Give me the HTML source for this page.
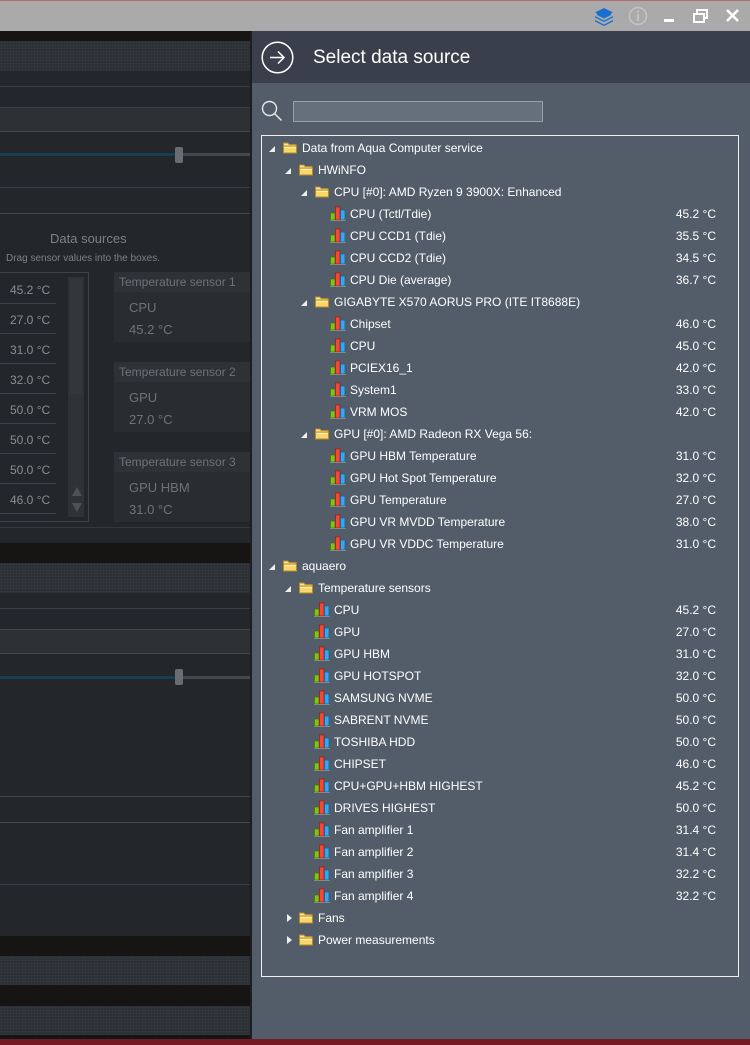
<!DOCTYPE html>
<html><head><meta charset="utf-8"><style>
*{margin:0;padding:0;box-sizing:border-box}
body{width:750px;height:1045px;overflow:hidden;background:#23272b;font-family:"Liberation Sans",sans-serif;position:relative}
.a{position:absolute}
.blk{position:absolute;left:0;width:251px;background:#171414}
.dot{position:absolute;left:0;width:251px;background-color:#2c3035;background-image:radial-gradient(#343941 0.8px,transparent 0.9px);background-size:3px 3px}
.hl{position:absolute;left:0;width:251px;height:1px;background:#3a3f45}
.band{position:absolute;left:0;width:251px;background:#2d3136}
.track{position:absolute;left:0;width:251px;height:3px}
.thumb{position:absolute;left:175px;width:8px;height:16px;background:#6a6d70;border-radius:2px}
.lv{position:absolute;left:10px;font-size:12px;color:#8a8e92}
.sep{position:absolute;left:0;width:56px;height:1px;background:#3e4349}
.sb{position:absolute;left:114px;width:137px;background:#292d31}
.sb .h{height:20px;background:#2e3237;color:#6e7378;font-size:12px;padding:3px 0 0 5px}
.sb .t{color:#6e7378;font-size:13px;padding-left:15px;line-height:22px;margin-top:5px}
.row{position:absolute;height:22px;line-height:22px;font-size:12px;color:#fff;white-space:nowrap}
.val{position:absolute;right:34px;font-size:12px;color:#fff;height:22px;line-height:22px}
.tri{position:absolute;width:0;height:0}
.tri.d{border-left:6px solid transparent;border-bottom:6px solid #eee;margin-top:9px}
.tri.r{border-top:4px solid transparent;border-bottom:4px solid transparent;border-left:5px solid #eee;margin-top:7px}
.fold{position:absolute;width:16px;height:14px}
.bar{position:absolute;width:16px;height:15px}
</style></head><body>
<div class="a" style="left:0;top:0;width:750px;height:31px;background:#aaaaaa;border-top:1px solid #b36b72"></div>
<svg class="a" style="left:594px;top:7px" width="20" height="19" viewBox="0 0 20 19"><path d="M10 1 L19 5.5 L10 10 L1 5.5Z" fill="#1a6fd0"/><path d="M1 9 L10 13.5 L19 9 L19 10.5 L10 15 L1 10.5Z" fill="#1a6fd0"/><path d="M1 13 L10 17.5 L19 13 L19 14.5 L10 19 L1 14.5Z" fill="#1a6fd0"/><path d="M3 6 L10 9.5 L17 6 L17 8 L10 11.5 L3 8Z" fill="#1a6fd0"/></svg>
<svg class="a" style="left:628px;top:6px" width="20" height="20" viewBox="0 0 20 20"><circle cx="10" cy="10" r="8.5" fill="none" stroke="#c4c4c4" stroke-width="1.5"/><rect x="9" y="8" width="2" height="7" fill="#c4c4c4"/><rect x="9" y="4.5" width="2" height="2" fill="#c4c4c4"/></svg>
<div class="a" style="left:664px;top:19px;width:10px;height:3px;background:#fff"></div>
<svg class="a" style="left:693px;top:9px" width="16" height="14" viewBox="0 0 16 14"><rect x="4" y="1" width="10" height="8" fill="none" stroke="#fff" stroke-width="2"/><rect x="1" y="5" width="10" height="8" fill="#aaa" stroke="#fff" stroke-width="2"/></svg>
<svg class="a" style="left:725px;top:8px" width="15" height="15" viewBox="0 0 15 15"><path d="M2 2L13 13M13 2L2 13" stroke="#fff" stroke-width="2.6"/></svg>

<div class="blk" style="top:31px;height:10px"></div>
<div class="dot" style="top:41px;height:30px"></div>
<div class="hl" style="top:86px"></div>
<div class="band" style="top:107px;height:24px"></div>
<div class="hl" style="top:107px"></div><div class="hl" style="top:131px;background:#44484d"></div>
<div class="track" style="top:153px;background:#173e52;width:176px"></div>
<div class="track" style="top:153px;left:183px;width:68px;background:#45484b"></div>
<div class="thumb" style="top:147px"></div>
<div class="hl" style="top:187px"></div>
<div class="hl" style="top:213px;background:#44484d"></div>
<div class="a" style="left:50px;top:231px;font-size:13px;color:#7d8185">Data sources</div>
<div class="a" style="left:6px;top:253px;font-size:10px;color:#7d8185">Drag sensor values into the boxes.</div>
<div class="a" style="left:0;top:272px;width:89px;height:250px;border:1px solid #3e4348;border-left:none"></div>
<div class="a" style="left:68px;top:277px;width:16px;height:240px;background:#2f3337"></div>
<div class="a" style="left:70px;top:279px;width:12px;height:115px;background:#33373b"></div>
<div class="a" style="left:72px;top:487px;border-left:5px solid transparent;border-right:5px solid transparent;border-bottom:9px solid #4e5256"></div>
<div class="a" style="left:72px;top:503px;border-left:5px solid transparent;border-right:5px solid transparent;border-top:9px solid #4e5256"></div>
<div class="lv" style="top:283px">45.2 °C</div><div class="sep" style="top:303px"></div>
<div class="lv" style="top:313px">27.0 °C</div><div class="sep" style="top:333px"></div>
<div class="lv" style="top:343px">31.0 °C</div><div class="sep" style="top:363px"></div>
<div class="lv" style="top:373px">32.0 °C</div><div class="sep" style="top:393px"></div>
<div class="lv" style="top:403px">50.0 °C</div><div class="sep" style="top:423px"></div>
<div class="lv" style="top:433px">50.0 °C</div><div class="sep" style="top:453px"></div>
<div class="lv" style="top:463px">50.0 °C</div><div class="sep" style="top:483px"></div>
<div class="lv" style="top:493px">46.0 °C</div><div class="sep" style="top:513px"></div>
<div class="sb" style="top:272px;height:70px"><div class="h">Temperature sensor 1</div><div class="t">CPU<br>45.2 °C</div></div>
<div class="sb" style="top:362px;height:70px"><div class="h">Temperature sensor 2</div><div class="t">GPU<br>27.0 °C</div></div>
<div class="sb" style="top:452px;height:70px"><div class="h">Temperature sensor 3</div><div class="t">GPU HBM<br>31.0 °C</div></div>
<div class="hl" style="top:527px;background:#33383d"></div>
<div class="blk" style="top:543px;height:20px"></div>
<div class="dot" style="top:563px;height:30px"></div>
<div class="hl" style="top:608px"></div>
<div class="band" style="top:629px;height:24px"></div>
<div class="hl" style="top:629px;background:#44484d"></div><div class="hl" style="top:653px;background:#44484d"></div>
<div class="track" style="top:676px;background:#173e52;width:176px"></div>
<div class="track" style="top:676px;left:183px;width:68px;background:#45484b"></div>
<div class="thumb" style="top:669px"></div>
<div class="hl" style="top:796px;background:#44484d"></div>
<div class="hl" style="top:822px;background:#44484d"></div>
<div class="hl" style="top:884px"></div>
<div class="blk" style="top:936px;height:20px"></div>
<div class="dot" style="top:956px;height:29px"></div>
<div class="blk" style="top:985px;height:21px"></div>
<div class="dot" style="top:1006px;height:29px"></div>
<div class="blk" style="top:1035px;height:4px"></div>

<div class="a" style="left:251px;top:31px;width:499px;height:1008px;background:#525d69"></div>
<div class="a" style="left:251px;top:31px;width:499px;height:52px;background:#3a404b"></div>
<div class="a" style="left:250px;top:31px;width:2px;height:1008px;background:#1c1f22"></div>
<svg class="a" style="left:261px;top:41px" width="33" height="33" viewBox="0 0 33 33"><circle cx="16.5" cy="16.5" r="15.3" fill="none" stroke="#fff" stroke-width="1.5"/><path d="M9 16.5H23M17 10.5L23 16.5L17 22.5" fill="none" stroke="#fff" stroke-width="1.5"/></svg>
<div class="a" style="left:313px;top:47px;font-size:19px;color:#fff">Select data source</div>
<svg class="a" style="left:261px;top:100px" width="22" height="22" viewBox="0 0 22 22"><circle cx="8.5" cy="8.5" r="7" fill="none" stroke="#e6e6e6" stroke-width="1.4"/><path d="M13.5 13.5L20.5 20.5" stroke="#e6e6e6" stroke-width="1.5"/></svg>
<div class="a" style="left:293px;top:101px;width:250px;height:21px;background:#66707b;border:1px solid #99a0a8"></div>
<div class="a" style="left:261px;top:135px;width:478px;height:842px;border:1px solid #f0f0f0"></div>
<div class="a" style="left:0;top:1039px;width:750px;height:6px;background:#741a25"></div>

<svg width="0" height="0" style="position:absolute"><defs>
<symbol id="f" viewBox="0 0 16 14"><path d="M1 2.5H6L7.5 4H14.5V13H1Z" fill="#b88a2a"/><path d="M2 3.5H5.6L7 5H13.5V12H2Z" fill="#fde58a"/><path d="M1.5 6H14.5V13H1.5Z" fill="#f7d66a" stroke="#b88a2a" stroke-width="1"/><path d="M2.5 7H13.5V8H2.5Z" fill="#fff3c4"/></symbol>
<symbol id="b" viewBox="0 0 16 15"><rect x="0.5" y="7" width="4.5" height="7" fill="#7fc31c" stroke="#3f7a10" stroke-width="0.8"/><rect x="5.5" y="1" width="4.5" height="13" fill="#f04a3a" stroke="#a02010" stroke-width="0.8"/><rect x="10.5" y="4" width="4.5" height="10" fill="#3aa6ea" stroke="#1560a0" stroke-width="0.8"/><rect x="0" y="14" width="16" height="1" fill="#888"/></symbol>
</defs></svg>

<div id="tree"></div>
<script>
var rows=[
[0,'f','d','Data from Aqua Computer service'],
[1,'f','d','HWiNFO'],
[2,'f','d','CPU [#0]: AMD Ryzen 9 3900X: Enhanced'],
[3,'b','','CPU (Tctl/Tdie)','45.2 °C'],
[3,'b','','CPU CCD1 (Tdie)','35.5 °C'],
[3,'b','','CPU CCD2 (Tdie)','34.5 °C'],
[3,'b','','CPU Die (average)','36.7 °C'],
[2,'f','d','GIGABYTE X570 AORUS PRO (ITE IT8688E)'],
[3,'b','','Chipset','46.0 °C'],
[3,'b','','CPU','45.0 °C'],
[3,'b','','PCIEX16_1','42.0 °C'],
[3,'b','','System1','33.0 °C'],
[3,'b','','VRM MOS','42.0 °C'],
[2,'f','d','GPU [#0]: AMD Radeon RX Vega 56:'],
[3,'b','','GPU HBM Temperature','31.0 °C'],
[3,'b','','GPU Hot Spot Temperature','32.0 °C'],
[3,'b','','GPU Temperature','27.0 °C'],
[3,'b','','GPU VR MVDD Temperature','38.0 °C'],
[3,'b','','GPU VR VDDC Temperature','31.0 °C'],
[0,'f','d','aquaero'],
[1,'f','d','Temperature sensors'],
[2,'b','','CPU','45.2 °C'],
[2,'b','','GPU','27.0 °C'],
[2,'b','','GPU HBM','31.0 °C'],
[2,'b','','GPU HOTSPOT','32.0 °C'],
[2,'b','','SAMSUNG NVME','50.0 °C'],
[2,'b','','SABRENT NVME','50.0 °C'],
[2,'b','','TOSHIBA HDD','50.0 °C'],
[2,'b','','CHIPSET','46.0 °C'],
[2,'b','','CPU+GPU+HBM HIGHEST','45.2 °C'],
[2,'b','','DRIVES HIGHEST','50.0 °C'],
[2,'b','','Fan amplifier 1','31.4 °C'],
[2,'b','','Fan amplifier 2','31.4 °C'],
[2,'b','','Fan amplifier 3','32.2 °C'],
[2,'b','','Fan amplifier 4','32.2 °C'],
[1,'f','r','Fans'],
[1,'f','r','Power measurements']];
var h='';
rows.forEach(function(r,i){
 var top=137+22*i, x=266+16*r[0];
 if(r[2]) h+='<div class="tri '+r[2]+'" style="left:'+(x+(r[2]=='r'?5:3))+'px;top:'+top+'px"></div>';
 var ix=x+16;
 if(r[1]=='f') h+='<svg class="fold" style="left:'+ix+'px;top:'+(top+3)+'px" width="16" height="14"><use href="#f"/></svg>';
 else h+='<svg class="bar" style="left:'+ix+'px;top:'+(top+3)+'px" width="16" height="15"><use href="#b"/></svg>';
 h+='<div class="row" style="left:'+(ix+20)+'px;top:'+top+'px">'+r[3]+'</div>';
 if(r[4]) h+='<div class="val" style="top:'+top+'px">'+r[4]+'</div>';
});
document.getElementById('tree').innerHTML=h;
</script>
</body></html>
